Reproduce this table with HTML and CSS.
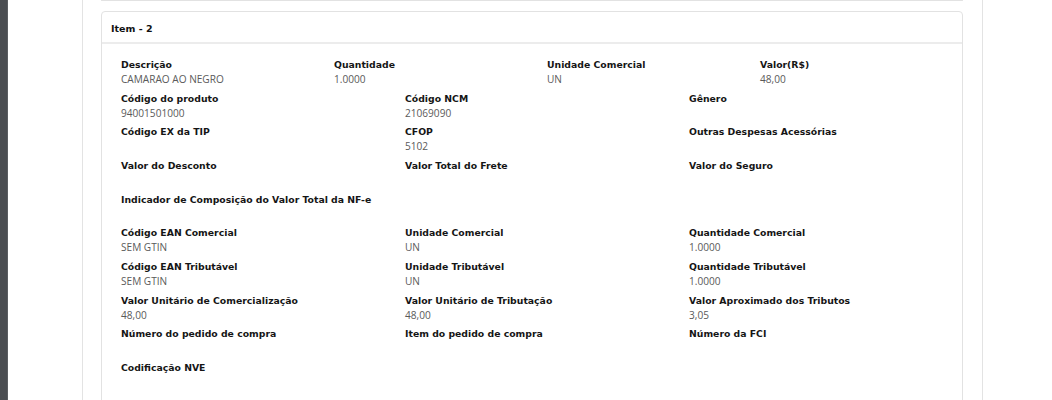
FILE: index.html
```html
<!DOCTYPE html>
<html lang="pt">
<head>
<meta charset="utf-8">
<link rel="stylesheet" href="styles.css">
</head>
<body>
<div class="strip"></div>
<div class="page">
  <div class="prev-card"></div>
  <div class="card">
    <div class="card-header">Item - 2</div>
    <div class="card-body">
      <div class="row four">
        <div class="field"><div class="label">Descrição</div><div class="value">CAMARAO AO NEGRO</div></div>
        <div class="field"><div class="label">Quantidade</div><div class="value">1.0000</div></div>
        <div class="field"><div class="label">Unidade Comercial</div><div class="value">UN</div></div>
        <div class="field"><div class="label">Valor(R$)</div><div class="value">48,00</div></div>
      </div>
      <div class="row three">
        <div class="field"><div class="label">Código do produto</div><div class="value">94001501000</div></div>
        <div class="field"><div class="label">Código NCM</div><div class="value">21069090</div></div>
        <div class="field"><div class="label">Gênero</div><div class="value"></div></div>
      </div>
      <div class="row three">
        <div class="field"><div class="label">Código EX da TIP</div><div class="value"></div></div>
        <div class="field"><div class="label">CFOP</div><div class="value">5102</div></div>
        <div class="field"><div class="label">Outras Despesas Acessórias</div><div class="value"></div></div>
      </div>
      <div class="row three">
        <div class="field"><div class="label">Valor do Desconto</div><div class="value"></div></div>
        <div class="field"><div class="label">Valor Total do Frete</div><div class="value"></div></div>
        <div class="field"><div class="label">Valor do Seguro</div><div class="value"></div></div>
      </div>
      <div class="row one">
        <div class="field"><div class="label">Indicador de Composição do Valor Total da NF-e</div><div class="value"></div></div>
      </div>
      <div class="row three">
        <div class="field"><div class="label">Código EAN Comercial</div><div class="value">SEM GTIN</div></div>
        <div class="field"><div class="label">Unidade Comercial</div><div class="value">UN</div></div>
        <div class="field"><div class="label">Quantidade Comercial</div><div class="value">1.0000</div></div>
      </div>
      <div class="row three">
        <div class="field"><div class="label">Código EAN Tributável</div><div class="value">SEM GTIN</div></div>
        <div class="field"><div class="label">Unidade Tributável</div><div class="value">UN</div></div>
        <div class="field"><div class="label">Quantidade Tributável</div><div class="value">1.0000</div></div>
      </div>
      <div class="row three">
        <div class="field"><div class="label">Valor Unitário de Comercialização</div><div class="value">48,00</div></div>
        <div class="field"><div class="label">Valor Unitário de Tributação</div><div class="value">48,00</div></div>
        <div class="field"><div class="label">Valor Aproximado dos Tributos</div><div class="value">3,05</div></div>
      </div>
      <div class="row three">
        <div class="field"><div class="label">Número do pedido de compra</div><div class="value"></div></div>
        <div class="field"><div class="label">Item do pedido de compra</div><div class="value"></div></div>
        <div class="field"><div class="label">Número da FCI</div><div class="value"></div></div>
      </div>
      <div class="row one">
        <div class="field"><div class="label">Codificação NVE</div><div class="value"></div></div>
      </div>
    </div>
  </div>
</div>
</body>
</html>
```
FILE: styles.css
```css
html, body {
  margin: 0;
  padding: 0;
  background: #ffffff;
  height: 400px;
  overflow: hidden;
}
body {
  display: flex;
  align-items: flex-start;
  font-family: "DejaVu Sans", Verdana, sans-serif;
}
.strip {
  width: 7px;
  height: 400px;
  flex: none;
  background: #4b4e51;
  border-right: 1px solid #5c5f62;
}
.page {
  flex: none;
  margin-left: 74px;
  width: 862px;
  height: 400px;
  overflow: hidden;
  border-left: 1px solid #e3e3e3;
  border-right: 1px solid #e3e3e3;
  padding: 0 19px 0 18px;
}
.prev-card {
  height: 0;
  border: 1px solid #e2e2e2;
  border-top: none;
  border-radius: 0 0 4px 4px;
  margin-bottom: 10px;
}
.card {
  border: 1px solid #e2e2e2;
  border-radius: 4px;
}
.card-header {
  height: 27px;
  line-height: 27px;
  padding: 3px 9px 0 9px;
  border-bottom: 2px solid #ececec;
  font-weight: bold;
  font-size: 9.5px;
  color: #111;
}
.card-body {
  padding: 14px 4px 40px 4px;
}
.row {
  display: grid;
}
.row.four { grid-template-columns: repeat(4, 1fr); }
.row.three { grid-template-columns: repeat(3, 1fr); }
.row.one { grid-template-columns: 1fr; }
.field {
  padding: 0 15px;
  margin-bottom: 5.67px;
}
.label {
  font-family: "DejaVu Sans", Verdana, sans-serif;
  font-weight: bold;
  font-size: 9.3px;
  line-height: 14px;
  height: 14px;
  color: #151515;
  white-space: nowrap;
}
.value {
  font-family: "Open Sans", sans-serif;
  font-size: 10.1px;
  line-height: 14px;
  height: 14px;
  color: #5a5a5a;
  white-space: nowrap;
}
```
